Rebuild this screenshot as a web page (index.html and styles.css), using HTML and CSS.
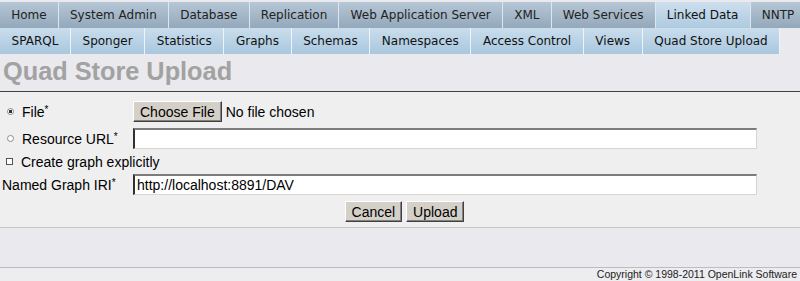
FILE: index.html
```html
<!DOCTYPE html>
<html lang="en">
<head>
  <meta charset="UTF-8" />
  <title>Quad Store Upload</title>
  <link rel="stylesheet" href="styles.css">
</head>
<body>
  <div class="tabs tabs-main">
    <a class="tab" href="#">Home</a>
    <a class="tab" href="#">System Admin</a>
    <a class="tab" href="#">Database</a>
    <a class="tab" href="#">Replication</a>
    <a class="tab" href="#">Web Application Server</a>
    <a class="tab" href="#">XML</a>
    <a class="tab" href="#">Web Services</a>
    <a class="tab active" href="#">Linked Data</a>
    <a class="tab" href="#">NNTP</a>
  </div>
  <div class="tabs tabs-sub">
    <a class="tab" href="#">SPARQL</a>
    <a class="tab" href="#">Sponger</a>
    <a class="tab" href="#">Statistics</a>
    <a class="tab" href="#">Graphs</a>
    <a class="tab" href="#">Schemas</a>
    <a class="tab" href="#">Namespaces</a>
    <a class="tab" href="#">Access Control</a>
    <a class="tab" href="#">Views</a>
    <a class="tab" href="#">Quad Store Upload</a>
  </div>

  <h1 class="page-title">Quad Store Upload</h1>

  <form class="upload-form" onsubmit="return false">
    <div class="form-grid">
      <label class="opt"><input type="radio" name="src" checked> <span>File<sup>*</sup></span></label>
      <div class="file-field">
        <button type="button" class="btn">Choose File</button>
        <span>No file chosen</span>
      </div>

      <label class="opt"><input type="radio" name="src"> <span>Resource URL<sup>*</sup></span></label>
      <div class="field"><input type="text" class="text-input"></div>

      <label class="opt opt-check"><input type="checkbox"> <span>Create graph explicitly</span></label>

      <label class="lbl">Named Graph IRI<sup>*</sup></label>
      <div class="field"><input type="text" class="text-input" value="http://localhost:8891/DAV"></div>

      <div class="actions">
        <button type="button" class="btn">Cancel</button>
        <button type="submit" class="btn">Upload</button>
      </div>
    </div>
  </form>

  <div class="spacer"></div>
  <div class="footer">Copyright &copy; 1998-2011 OpenLink Software</div>
</body>
</html>
```

FILE: styles.css
```css
body {
  margin: 0;
  background: #e9e9ee;
  font-family: "Liberation Sans", Arial, sans-serif;
  font-size: 14px;
  color: #000;
  overflow: hidden;
}

/* tab bars */
.tabs {
  display: flex;
  height: 26px;
  white-space: nowrap;
  overflow: hidden;
}
.tabs-main {
  margin-top: 2px;
}
.tab {
  display: block;
  flex-shrink: 0;
  box-sizing: border-box;
  height: 26px;
  line-height: 26px;
  padding: 0 11.2px;
  font-family: "DejaVu Sans", Verdana, sans-serif;
  font-size: 12px;
  color: #222;
  text-decoration: none;
  border-right: 1px solid #dde6ee;
}
.tabs-main .tab {
  background: linear-gradient(#b6c7d6, #93a8bb);
}
.tabs-main .tab.active {
  background: linear-gradient(#cddfee, #aecae0);
  color: #111;
}
.tabs-sub .tab {
  padding: 0 11.6px;
  background: linear-gradient(#c9ddec, #a9c7de);
  border-right-color: #edf3f8;
  color: #111;
}

.page-title {
  margin: 0;
  padding: 3px 3px 6px;
  line-height: 28px;
  font-size: 25.3px;
  font-weight: bold;
  color: #a2a2a2;
  border-bottom: 1px solid #404040;
}

/* form */
.upload-form {
  background: #efefef;
  border-bottom: 1px solid #c6c6c6;
  padding-top: 6px;
}
.form-grid {
  display: grid;
  grid-template-columns: 133px 624px;
  grid-template-rows: 27px 27px 19px 27px 29px;
  align-items: center;
}
.opt {
  display: flex;
  align-items: center;
  gap: 8px;
  padding-left: 7px;
}
.opt-check {
  grid-column: 1 / 3;
  padding-left: 6px;
}
.lbl {
  padding-left: 2px;
}
sup {
  font-size: 10px;
  line-height: 0;
  vertical-align: 4px;
}

input[type="radio"],
input[type="checkbox"] {
  appearance: none;
  margin: 0;
  width: 7px;
  height: 7px;
  box-sizing: border-box;
  border: 1px solid #8a8a8a;
  background: #fff;
}
input[type="radio"] {
  border-radius: 50%;
}
input[type="radio"]:checked {
  background: radial-gradient(circle, #333 0 1.5px, #fff 2px);
}
input[type="checkbox"] {
  border-color: #555;
}

.file-field {
  display: flex;
  align-items: center;
  gap: 4px;
}
.text-input {
  display: block;
  box-sizing: border-box;
  width: 624px;
  height: 21px;
  margin: 0;
  padding: 0 2px;
  font-family: inherit;
  font-size: 14px;
  color: #000;
  background: #fff;
  border-style: solid;
  border-width: 2px 1px 1px 2px;
  border-color: #7c7c7c #d8d5ce #d8d5ce #303030;
  outline: none;
}

.btn {
  box-sizing: border-box;
  height: 21px;
  margin: 0;
  padding: 0 6px;
  font-family: inherit;
  font-size: 14px;
  color: #000;
  background: #d4d0c8;
  border-style: solid;
  border-width: 1px;
  border-color: #fff #404040 #404040 #fff;
  box-shadow: inset -1px -1px #808080;
}

.actions {
  grid-column: 1 / 3;
  display: flex;
  justify-content: center;
  gap: 4px;
  padding-left: 52px;
  padding-bottom: 2px;
}

.spacer {
  height: 39px;
  border-bottom: 1px solid #bdbdbd;
}
.footer {
  height: 13px;
  line-height: 13px;
  padding-right: 3px;
  text-align: right;
  font-size: 10.5px;
  color: #222;
  background: #ededf0;
}
```
